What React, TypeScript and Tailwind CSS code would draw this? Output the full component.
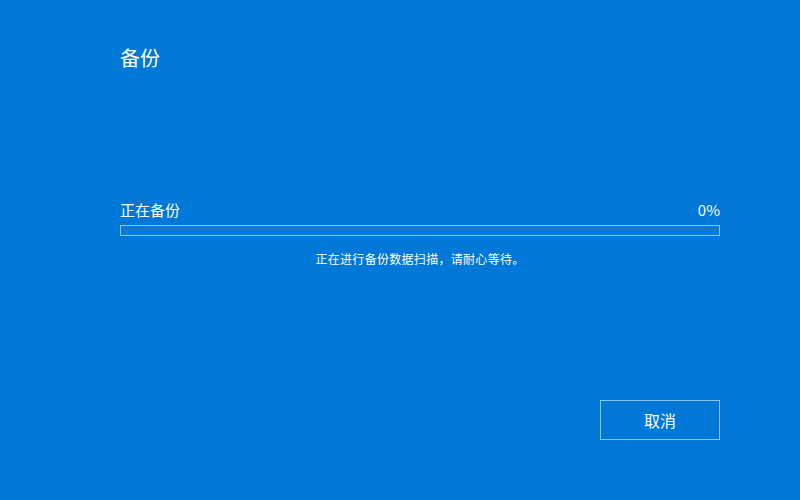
export default function App() {
  const font = { fontFamily: '"Noto Sans CJK SC", "Noto Sans", sans-serif' };
  return (
    <div className="w-[800px] h-[500px] bg-[#0078d7] text-white overflow-hidden" style={font}>
      <div className="w-[600px] ml-[120px] flex flex-col">
        <div className="mt-[44px] h-[28px] text-[20px] leading-[28px]">备份</div>
        <div className="mt-[126px] flex justify-between items-center h-[24px] text-[15px] leading-[24px]">
          <span>正在备份</span>
          <span>0%</span>
        </div>
        <div className="mt-[3px] h-[11px] border border-[#8fc2ec] bg-[#0a7ad6]"></div>
        <div className="mt-[14px] text-center text-[12px] leading-[18px] tracking-[0.3px]">正在进行备份数据扫描，请耐心等待。</div>
        <div className="mt-[132px] flex justify-end">
          <button className="w-[120px] h-[40px] border border-[#8fc2ec] text-[16px] leading-[24px] flex items-center justify-center">取消</button>
        </div>
      </div>
    </div>
  );
}
